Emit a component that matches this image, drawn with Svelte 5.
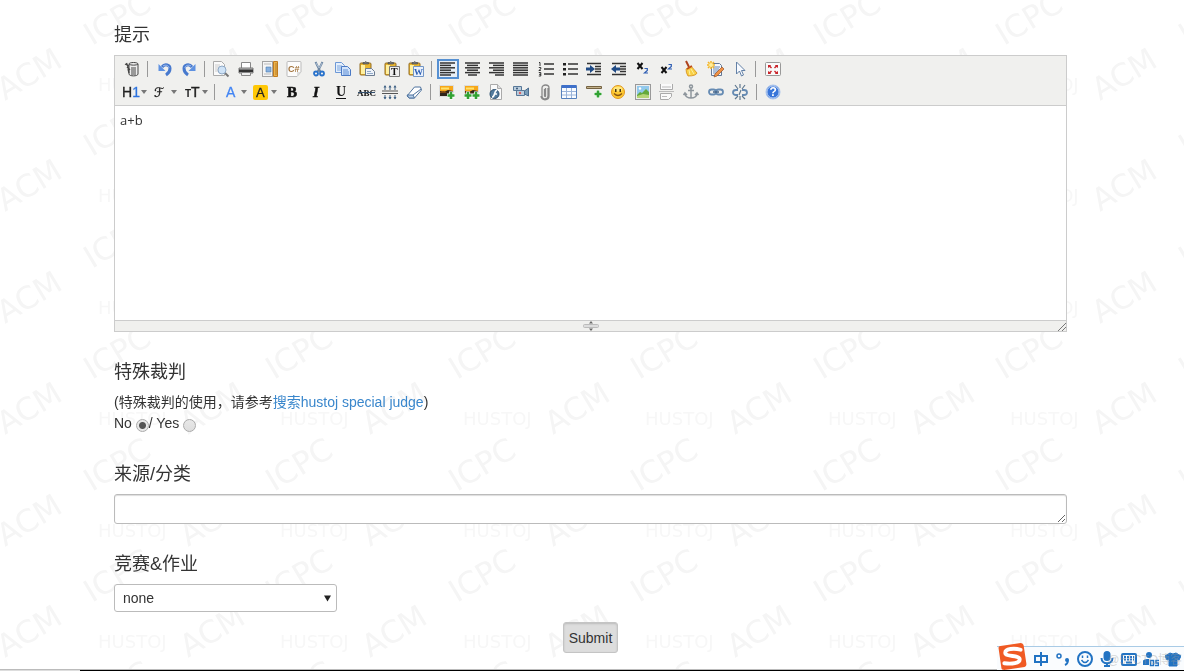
<script lang="ts">
	interface Tool {
		name: string;
		wide?: boolean;
		active?: boolean;
	}

	let hint = $state('a+b');
	let source = $state('');
	let spj = $state('0');
	let contest = $state('none');
	let innerWidth = $state(0);
	let innerHeight = $state(0);

	// '|' is a separator, '*' marks the active button, '+' a button with a drop-down arrow
	const layout = [
		'source | undo redo | preview print template code cut copy paste plainpaste wordpaste | *justifyleft justifycenter justifyright justifyfull orderedlist unorderedlist indent outdent subscript superscript clearhtml quickformat selectall | fullscreen',
		'+formatblock +fontname +fontsize | +forecolor +hilitecolor bold italic underline strikethrough lineheight removeformat | image multiimage flash media insertfile table hr emoticons baidumap pagebreak anchor link unlink | about'
	];

	const rows: (Tool | null)[][] = layout.map((row) =>
		row.split(' ').map((item) => {
			if (item === '|') return null;
			return { name: item.replace(/^[*+]/, ''), wide: item[0] === '+', active: item[0] === '*' };
		})
	);

	const lines = (widths: number[], align: string) =>
		widths
			.map((w, i) => {
				const x = align === 'left' ? 0 : align === 'right' ? 15 - w : (15 - w) / 2;
				return `<path stroke="#333" stroke-width="1.5" d="M${x} ${2 + i * 2.4}h${w}"/>`;
			})
			.join('');

	const board =
		'<rect x="1" y="2" width="11" height="12" rx="1" fill="#e9b62f" stroke="#936c25"/><path fill="#fff0a0" d="M2 4h4v9H2z"/><path fill="#777" stroke="#444" stroke-width=".6" d="M4 3V1.5h1.5l1-1 1.5 1h1.5V3z"/>';
	const photo =
		'<rect x=".5" y="1.5" width="14" height="11" fill="#302419" stroke="#ddd"/><path fill="#f7a719" d="M1 2h13v5L9 6 5 8 1 7z"/><path fill="#ffe26b" d="M2 3.500h8v2H2z"/><path fill="#794411" d="M1 8l4-1 3 2 6-1v1H1z"/>';
	const plus = (x: number, y: number) =>
		`<path stroke="#fff" stroke-width="4" d="M${x - 4} ${y}h8M${x} ${y - 4}v8"/><path stroke="#32a233" stroke-width="2.6" d="M${x - 3.5} ${y}h7M${x} ${y - 3.5}v7"/>`;
	const sheet = '<path fill="#fafafa" stroke="#aaa" d="M2.5.5h7l4 4v11h-11z"/><path fill="#ddd" stroke="#aaa" d="M9.5.5v4h4"/>';
	const marker = '<path stroke="#333" stroke-width="1.5" d="M6 3h10M6 8h10M6 13h10"/>';
	const shift = '<path stroke="#333" stroke-width="1.5" d="M1 2.5h14M9 5.5h6M9 8h6M9 10.5h6M1 13.5h14"/>';
	const serif = 'font-family="Liberation Serif, serif" fill="#111"';
	const sans = 'font-family="Liberation Sans, sans-serif"';

	const icons: Record<string, string> = {
		source:
			'<path fill="#eee" stroke="#444" d="M5 3C5 1 14 1 14 3v10c0 2.500-9 2.500-9 0z"/><path fill="none" stroke="#444" d="M5 3c1 1.500 8 1.500 9 0M7 7h5M7 9h5M7 11h5M7 13h5"/><path fill="none" stroke="#444" stroke-width="1.300" d="M1 3l4 2M2.500 2l2 5M3 6l3 3M4 8l1 4"/>',
		undo: '<path fill="none" stroke="#4779ce" stroke-width="3" d="M5 6c3-4 8-2 8 1.500 0 3-1 4.500-4 6.500"/><path fill="#5e91e1" d="M1.500 3v7h7z"/><path fill="none" stroke="#b4cdf4" stroke-width=".8" d="M6 5c3-2 6 0 6 2"/>',
		redo: '<path fill="none" stroke="#4779ce" stroke-width="3" d="M11 6C8 2 3 4 3 7.500c0 3 1 4.500 4 6.500"/><path fill="#5e91e1" d="M14.500 3v7h-7z"/><path fill="none" stroke="#b4cdf4" stroke-width=".8" d="M10 5C7 3 4 5 4 7"/>',
		preview:
			'<path fill="#fafafa" stroke="#aaa" d="M.5.5h8l3 3v11H.5z"/><path stroke="#ccc" d="M2 4h5M2 6h6M2 8h4M2 10h3"/><path stroke="#777" stroke-width="2" d="M11.500 11.500l4 4"/><circle cx="9" cy="9" r="4" fill="#cfe3f7" stroke="#8fa9c5"/>',
		print:
			'<path fill="#fff" stroke="#888" d="M3.500 1.500h9v6h-9z"/><path fill="#bbb" stroke="#777" d="M1 7h14v5H1z"/><path fill="#333" d="M1 8.500h14V11H1z"/><path fill="#eee" stroke="#888" d="M3.500 11.500h9v3h-9z"/>',
		template:
			'<path fill="#f5f5f5" stroke="#555" stroke-dasharray="1 1" d="M.5.5h10v15H.5z"/><path fill="#86b0e0" stroke="#4c7dae" stroke-width=".6" d="M4 6h5v5H4z"/><path stroke="#bbb" d="M2 3h7M2 13h7"/><path fill="#edb34b" stroke="#c07b20" d="M11.500.5h4v15h-4z"/><path stroke="#8e5b17" stroke-width=".6" d="M13 3h2M13 5h2M13 7h2M13 9h2M13 11h2M13 13h2"/>',
		code: `<path fill="#fcfcfc" stroke="#bbb" d="M2 .5h12q1 0 1 1V11l-4 4.500H2q-1 0-1-1v-13q0-1 1-1z"/><path fill="#ddd" d="M11 15l4-4h-4z"/><text x="2" y="10.500" font-size="9" font-weight="bold" ${sans} fill="#a3743c">C#</text>`,
		cut: '<path stroke="#6c86a3" stroke-width="2" d="M4.500 1l5 10M11.500 1l-5 10"/><path stroke="#dce8f4" stroke-width=".6" d="M5 2l3 5M11 2L8.500 7"/><circle cx="5" cy="12.500" r="2" fill="none" stroke="#2872cb" stroke-width="1.800"/><circle cx="11" cy="12.500" r="2" fill="none" stroke="#2872cb" stroke-width="1.800"/>',
		copy: '<path fill="#e4effc" stroke="#6d98d6" d="M.5 1.500h6l3 3v7h-9z"/><path stroke="#7ba5de" d="M2 5h5M2 7h5M2 9h4"/><path fill="#d2e4fb" stroke="#4b7ac5" d="M6.500 5.500h6l3 3v6h-9z"/><path stroke="#5f8ed4" d="M8 9h5M8 11h6M8 13h6"/>',
		paste: board + '<path fill="#eef3f9" stroke="#6c7c91" d="M6.500 7.500h6l3 3v4h-9z"/><path stroke="#91a9c8" d="M8 10.500h4M8 12.500h6"/>',
		plainpaste: board + `<path fill="#eee" stroke="#777" d="M5.500 5.500h10v10h-10z"/><text x="7" y="14" font-size="10" font-weight="bold" ${serif}>T</text>`,
		wordpaste: board + `<path fill="#e9f1fc" stroke="#7396c6" d="M5.500 5.500h10v10h-10z"/><text x="6" y="14" font-size="9" font-weight="bold" font-family="Liberation Serif, serif" fill="#2e60b5">W</text>`,
		justifyleft: lines([15, 11, 15, 11, 15, 11], 'left'),
		justifycenter: lines([15, 11, 15, 11, 15, 9], 'center'),
		justifyright: lines([15, 11, 15, 11, 15, 9], 'right'),
		justifyfull: lines([15, 15, 15, 15, 15, 15], 'left'),
		orderedlist: marker + '<path fill="none" stroke="#222" stroke-width=".9" d="M1 1.500h1V5M.8 6.500h2V8l-2 1.500h2M.8 11.500h2V15h-2M1 13.300h2"/>',
		unorderedlist: marker + '<path fill="#222" d="M1 2h3v2.500H1zM1 7h3v2.500H1zM1 12h3v2.500H1z"/>',
		indent: shift + '<path fill="#1f4a85" d="M0 6.500h4V4l5 4-5 4V9.500H0z"/>',
		outdent: shift + '<path fill="#1f4a85" d="M9 6.500H5V4L0 8l5 4V9.500h4z"/>',
		subscript: '<path stroke="#111" stroke-width="2" d="M2.500 2l5 6M7.500 2l-5 6"/><path fill="none" stroke="#2d5db3" stroke-width="1.200" d="M9.500 7.500h2.800v2L9.500 12h3.500"/>',
		superscript: '<path stroke="#111" stroke-width="2" d="M2.500 6l5 6M7.500 6l-5 6"/><path fill="none" stroke="#2d5db3" stroke-width="1.200" d="M9.500 3.500h2.800v2L9.500 8h3.500"/>',
		clearhtml:
			'<path stroke="#ad421d" stroke-width="2" d="M3 0l3 6"/><path fill="#f8cf45" stroke="#d48b14" stroke-width=".8" d="M3 8l5-3 6 7q-1 3-9 3-2-3-2-7z"/><path stroke="#bd4c1d" stroke-width="1.500" d="M4 8l5-3"/><path stroke="#fbf0a0" d="M6 9l1 5M8 8l3 5"/>',
		quickformat:
			'<path fill="#f5f8fc" stroke="#637794" d="M3.500 2.500h8l2 2v10h-10z"/><path stroke="#6789b9" d="M5 6h7M5 8h6M5 10h6M5 12h5"/><path stroke="#f4b526" stroke-width="1.500" d="M3 0v8M-1 4h8M0 1l6 6M6 1L0 7"/><circle cx="3" cy="4" r="2" fill="#ffef9b"/><path fill="#ef9144" stroke="#985329" stroke-width=".7" d="M14 6l2 2-7 7-3 1 1-3z"/>',
		selectall: '<path fill="#f7faff" stroke="#6381a6" d="M4.500 1v12l3-3 2 5 2-1-2-4.500H13z"/>',
		fullscreen:
			'<rect x=".5" y="1.500" width="15" height="13" rx="1" fill="#f9f9f9" stroke="#999"/><path fill="#c9252b" d="M3 4h3L5.500 5 7 6.500l-1 1L4.500 6 3 7zM13 4h-3l.5 1L9 6.500l1 1L11.500 6 13 7zM3 13h3l-.5-1L7 10.500l-1-1L4.500 11 3 10zM13 13h-3l.5-1L9 10.500l1-1 1.500 1.500 1.500-1z"/>',
		formatblock: `<text x="-1" y="13" font-size="14" stroke="#222" stroke-width=".3" ${sans} fill="#222">H<tspan fill="#2d73df" stroke="#2d73df">1</tspan></text>`,
		fontname: '<text x="1" y="13" font-size="13" font-family="DejaVu Serif, DejaVu Sans, serif" stroke="#222" stroke-width=".3" fill="#222">ℱ</text>',
		fontsize: `<text x="1" y="13" font-size="10" font-weight="bold" ${sans} fill="#222">T<tspan font-size="14" font-weight="normal" stroke="#222" stroke-width=".4">T</tspan></text>`,
		forecolor: `<text x="3" y="13" font-size="14" stroke="#4285f4" stroke-width=".3" ${sans} fill="#4285f4">A</text>`,
		hilitecolor: `<rect x="0" y="1" width="15" height="15" rx="2" fill="#ffc806"/><text x="3" y="13" font-size="13" stroke="#222" stroke-width=".3" ${sans} fill="#222">A</text>`,
		bold: `<text x="3" y="13" font-size="15" font-weight="bold" stroke="#111" stroke-width=".6" ${serif}>B</text>`,
		italic: `<text x="4" y="13" font-size="15" font-weight="bold" font-style="italic" stroke="#111" stroke-width=".5" ${serif}>I</text>`,
		underline: `<text x="3" y="12" font-size="14" font-weight="bold" ${serif}>U</text><path stroke="#111" d="M3 14.500h10"/>`,
		strikethrough: `<text x="-1" y="11.500" font-size="9" font-weight="bold" ${serif}>ABC</text><path stroke="#34506e" d="M0 8.500h17"/>`,
		lineheight:
			'<path stroke="#555" stroke-width="1.200" d="M0 7h16M0 9.500h16"/><path stroke="#416385" d="M3 2v4M8 2v4M13 2v4M3 11v4M8 11v4M13 11v4"/><path fill="#416385" d="M1.500 3.500L3 1l1.500 2.500zM6.500 3.500L8 1l1.500 2.500zM11.500 3.500L13 1l1.500 2.500zM1.500 13L3 15.500 4.500 13zM6.500 13L8 15.500 9.500 13zM11.500 13l1.500 2.500 1.500-2.500z"/>',
		removeformat: '<path fill="#fff" stroke="#4e739e" d="M8.500 3h6l1 3-7 8H3l-2-2z"/><path fill="#b9d0e9" stroke="#4e739e" d="M1 11h6l1.500 3H3z"/><path stroke="#4e739e" d="M7 11l8-6"/>',
		image: photo + plus(12, 11.5),
		multiimage: photo + plus(4, 11.5) + plus(12, 11.5),
		flash: sheet + '<circle cx="6.500" cy="10" r="4.500" fill="#537b9d" stroke="#2b4f70"/><path fill="none" stroke="#fff" stroke-width="1.600" d="M9 6c-2 1-2 2-2.500 4S5 13 4 13M6 10h3"/>',
		media: '<path fill="#bacddd" stroke="#587898" d="M.5 2.500h8v4h-8zM3.500 6.500h8v5h-8z"/><path fill="#779bb8" stroke="#4b6d90" d="M11.500 7l4-3v8l-4-2z"/><circle cx="4" cy="4.500" r="1" fill="#365577"/><circle cx="7" cy="9" r="1.200" fill="#d76161"/>',
		insertfile: '<path fill="none" stroke="#888" stroke-width="1.300" d="M11 4v8c0 4-6 4-6 0V4c0-4 7-4 7 0v8c0 5-8 5-8 0M7.500 5v7q1 1 1 0V4"/>',
		table: '<path fill="#f9fcff" stroke="#5681bd" d="M.5 1.500h15v13H.5z"/><path fill="#3e70ca" d="M1 1h14v3H1z"/><path stroke="#9ab4da" d="M1 7.500h14M1 11h14M5.500 4v10M10.500 4v10"/>',
		hr: '<path fill="#c3b18a" stroke="#756342" d="M.5 2.500h15v2H.5z"/>' + plus(12, 10),
		emoticons: '<circle cx="8" cy="8" r="6.500" fill="#fdc832" stroke="#e19821"/><ellipse cx="8" cy="5" rx="4.500" ry="2.500" fill="#ffe77b"/><path fill="#493413" d="M5 5h1.500v3H5zM9.500 5H11v3H9.500z"/><path fill="none" stroke="#8a5510" stroke-width="1.200" d="M4 9.500q4 4 8 0"/>',
		baidumap: '<rect x=".5" y=".5" width="15" height="15" fill="#eee" stroke="#999"/><path fill="#92c9ed" d="M2 2h12v12H2z"/><path fill="#64a93c" d="M2 11l3-3 2 1 4-4 3 3v6H2z"/><path fill="#b5d577" d="M2 12l6-2 6 1v3H2z"/><circle cx="5" cy="4.500" r="1.200" fill="#fff"/>',
		pagebreak: '<path fill="#fafafa" stroke="#aaa" d="M1.500 0v5.500h12V0M1.500 15.500v-6h11v3l-3 3z"/><path stroke="#bbb" d="M3 3h9M0 7.500h15M3 12.500h5"/>',
		anchor: '<g fill="none" stroke="#8e969d" stroke-width="1.500"><circle cx="8" cy="2.500" r="1.500"/><path d="M8 4v10M5 6.500h6M2 9.500c0 6 12 6 12 0M.5 11L2 9l2 2M12 11l2-2 1.500 2"/></g>',
		link: '<g fill="none" stroke="#668bb3" stroke-width="1.800"><rect x="1" y="5.500" width="7" height="5" rx="2.500"/><rect x="8" y="5.500" width="7" height="5" rx="2.500"/></g><path stroke="#436388" stroke-width="1.500" d="M5 8h6"/>',
		unlink: '<g fill="none" stroke="#668bb3" stroke-width="1.800"><path d="M6 11H4q-3 0-3-2.500T4 6h2M10 11h2q3 0 3-2.500T12 6h-2"/></g><path stroke="#60798f" stroke-width="1.200" d="M8 0v4M3 1l3 4M13 1l-3 4M8 12v4M3 15l3-3M13 15l-3-3M9 6l-2 5"/>',
		about: `<circle cx="8" cy="8" r="7" fill="#3875d9" stroke="#aac5ed"/><circle cx="8" cy="8" r="6" fill="none" stroke="#fff" stroke-width=".6"/><text x="4.500" y="12" font-size="12" font-weight="bold" ${sans} fill="#fff">?</text>`
	};

	const ime = [
		{ name: 'Chinese input', art: '<path fill="none" d="M2 5h12v6H2zM8 1v14"/>' },
		{ name: 'Punctuation', art: '<circle cx="4" cy="5" r="2" fill="none" stroke-width="1.500"/><path fill="none" d="M12 8q2 4-2 6"/><circle cx="12" cy="9" r="1"/>' },
		{ name: 'Emoji', art: '<circle cx="8" cy="8" r="7" fill="none"/><path fill="none" stroke-width="1.500" d="M4.500 9q3.500 5 7 0M5.500 4.500v2.500M10.500 4.500v2.500"/>' },
		{ name: 'Voice', art: '<rect x="5.500" y="1" width="5" height="8" rx="2.500"/><path fill="none" d="M2.500 7c0 7 11 7 11 0M8 12v3M5 15h6"/>' },
		{ name: 'Keyboard', art: '<rect x="1" y="3" width="14" height="11" rx="1" fill="none"/><path stroke-dasharray="2 1" d="M3 6h10M3 8.500h10"/><path d="M5 11.500h6"/>' },
		{ name: 'Account', art: '<circle cx="6" cy="4" r="3" stroke="none"/><path stroke="none" d="M-1 13q0-5 5-5h4v6h-9z"/><path fill="#fff" stroke="none" d="M6 8h11v8H6z"/><path fill="none" stroke-width="1.500" d="M7.500 9.500h3v5h-3zM16 9.500h-3V12h2.500v2.500H12"/>' },
		{ name: 'Skin', art: '<path stroke-width="1" d="M5 2q3 2 6 0l5 3-2 4-2-1v7H4V8L2 9 0 5z"/>' }
	];

	// the watermark repeats twice in every 365 x 223 block
	let columns = $derived(Array.from({ length: Math.ceil(innerWidth / 182) + 1 }, (_, i) => Math.round((i * 365) / 2) - 183));
	let bands = $derived(Array.from({ length: Math.ceil(innerHeight / 111) + 1 }, (_, i) => Math.round((i * 223) / 2) - 120));
</script>

<svelte:window bind:innerWidth bind:innerHeight />

<svg class="backdrop" aria-hidden="true">
	{#each bands as y}
		{#each columns as x}
			<g transform="translate({x} {y})">
				<text class="slanted" transform="translate(92 54) rotate(-31)">ICPC</text>
				<text class="flat" x="98" y="99">HUSTOJ</text>
				<text class="slanted" transform="translate(188 109) rotate(-31)">ACM</text>
			</g>
		{/each}
	{/each}
</svg>

<form onsubmit={(e) => e.preventDefault()}>
	<section>
		<h4><label for="hint">提示</label></h4>
		<div class="editor">
			<div class="toolbar">
				{#each rows as row}
					<div class="row">
						{#each row as tool}
							{#if tool}
								<button type="button" class:wide={tool.wide} class:active={tool.active} aria-label={tool.name}>
									<svg class="icon" viewBox="0 0 16 16">{@html icons[tool.name]}</svg>
									{#if tool.wide}
										<svg class="caret" viewBox="0 0 6 4"><path d="M0 0h6L3 4z" /></svg>
									{/if}
								</button>
							{:else}
								<span class="separator"></span>
							{/if}
						{/each}
					</div>
				{/each}
			</div>
			<textarea id="hint" class="content" bind:value={hint}></textarea>
			<div class="statusbar">
				<svg class="handle" viewBox="0 0 16 10">
					<path fill="#666" d="M6 2.500L8 0l2 2.500zM6 7.500L8 10l2-2.500z" />
					<rect x="0.500" y="3.500" width="15" height="3" rx="1" fill="#ddd" stroke="#bbb" />
				</svg>
				<svg class="grip" viewBox="0 0 8 8"><path d="M0 8l8-8M4 8l4-4" /></svg>
			</div>
		</div>
	</section>

	<section>
		<h4>特殊裁判</h4>
		<div class="line">(特殊裁判的使用，请参考<a href="#spj">搜索hustoj special judge</a>)</div>
		<div class="line">
			<label>No <input type="radio" name="spj" value="0" bind:group={spj} /></label>/
			<label>Yes <input type="radio" name="spj" value="1" bind:group={spj} /></label>
		</div>
	</section>

	<section>
		<h4><label for="source">来源/分类</label></h4>
		<textarea id="source" class="source" bind:value={source}></textarea>
	</section>

	<section>
		<h4><label for="contest">竞赛&amp;作业</label></h4>
		<div class="select">
			<select id="contest" bind:value={contest}>
				<option value="none">none</option>
			</select>
			<svg viewBox="0 0 8 7"><path d="M0 0h8L4 7z" /></svg>
		</div>
	</section>

	<button class="submit" type="submit">Submit</button>
</form>

<div class="taskbar"></div>

<div class="ime">
	<svg class="sogou" viewBox="0 0 30 28" aria-hidden="true">
		<path fill="#f05a23" d="M1 5q0-2 2-2L24 0q2 0 3 2l3 20q0 2-2 3L7 28q-3 0-3-2z" />
		<path fill="none" stroke="#fff" stroke-width="4" stroke-linecap="round" d="M24 7C17 5 8 6 8 10c0 5 15 2 15 7 0 4-8 5-16 4" />
	</svg>
	{#each ime as item}
		<button type="button" aria-label={item.name}>
			<svg viewBox="0 0 16 16">{@html item.art}</svg>
		</button>
	{/each}
	<span class="credit">@51CTO博客</span>
</div>

<style>
	:global(body) {
		background: #fff;
		color: #333;
		font-family: 'Liberation Sans', 'Noto Sans CJK SC', sans-serif;
		font-size: 14px;
	}
	button,
	select,
	textarea {
		box-sizing: border-box;
		margin: 0;
		color: inherit;
		font: inherit;
	}
	.backdrop {
		position: fixed;
		inset: 0;
		z-index: -1;
		width: 100%;
		height: 100%;
		font-family: 'DejaVu Sans', sans-serif;
	}
	.slanted {
		fill: #f5f5f5;
		font-size: 31px;
	}
	.flat {
		fill: #f7f7f7;
		font-size: 18px;
	}
	form {
		display: flex;
		flex-direction: column;
		padding: 25px 117px 16px 114px;
	}
	section {
		margin-bottom: 30px;
	}
	section:last-of-type {
		margin-bottom: 10px;
	}
	h4 {
		margin: 0 0 10px;
		font-size: 18px;
		font-weight: normal;
		line-height: 20px;
	}
	.editor {
		border: 1px solid #ccc;
		background: #fff;
	}
	.toolbar {
		display: flex;
		flex-direction: column;
		gap: 3px;
		padding: 3px 6px;
		border-bottom: 1px solid #ccc;
		background: #f0f0ee;
	}
	.row {
		display: flex;
		align-items: center;
		justify-content: space-between;
		max-width: 663px;
	}
	.row button {
		display: flex;
		align-items: center;
		justify-content: center;
		width: 22px;
		height: 20px;
		padding: 0;
		border: 1px solid transparent;
		background: none;
	}
	.row button.wide {
		width: 28px;
	}
	.row button.active {
		border: 2px solid #5690d2;
		background: #e9eff6;
	}
	.icon {
		flex: none;
		width: 16px;
		height: 16px;
		overflow: visible;
	}
	.caret {
		width: 6px;
		height: 4px;
		margin-left: 2px;
		fill: #777;
	}
	.separator {
		width: 1px;
		height: 16px;
		margin: 0 3px 0 2px;
		background: #999;
	}
	.content {
		display: block;
		width: 100%;
		height: 214px;
		padding: 4px 5px;
		border: 0;
		outline: none;
		resize: none;
		font-family: 'Open Sans', sans-serif;
		font-size: 13px;
		line-height: 20px;
	}
	.statusbar {
		display: grid;
		grid-template-columns: 1fr auto 1fr;
		align-items: center;
		height: 10px;
		border-top: 1px solid #ccc;
		background: #f0f0ee;
	}
	.handle {
		grid-column: 2;
		width: 16px;
		height: 10px;
	}
	.grip {
		justify-self: end;
		align-self: end;
		width: 8px;
		height: 8px;
		stroke: #777;
	}
	.line {
		line-height: 21px;
	}
	a {
		color: #3a87cc;
		text-decoration: none;
	}
	input[type='radio'] {
		appearance: none;
		box-sizing: border-box;
		width: 13px;
		height: 13px;
		margin: 0;
		border: 1px solid #aaa;
		border-radius: 50%;
		background: linear-gradient(#e8e8e8, #ddd);
		vertical-align: -4px;
	}
	input[type='radio']:checked {
		background: radial-gradient(circle, #555 3px, #e8e8e8 4px);
	}
	.source {
		display: block;
		width: 100%;
		height: 30px;
		padding: 4px 8px;
		border: 1px solid #bbb;
		border-radius: 3px;
		background: #fff;
		box-shadow: inset 0 1px 1px #ddd;
		resize: vertical;
	}
	.select {
		display: grid;
		align-items: center;
		width: 223px;
	}
	.select select,
	.select svg {
		grid-area: 1 / 1;
	}
	.select select {
		appearance: none;
		height: 28px;
		padding: 0 8px;
		border: 1px solid #bbb;
		border-radius: 3px;
		background: #fff;
	}
	.select svg {
		justify-self: end;
		width: 7px;
		height: 7px;
		margin-right: 6px;
		fill: #222;
		pointer-events: none;
	}
	.submit {
		align-self: center;
		height: 31px;
		padding: 0 5px;
		border: 1px solid #c4c4c4;
		border-radius: 3px;
		background: #ddd;
		box-shadow: inset 0 1px 2px #bbb;
	}
	.taskbar {
		position: fixed;
		inset: auto 0 0;
		height: 1px;
		border-top: 1px solid #bbb;
		background: linear-gradient(90deg, #ddd 80px, #000 80px);
	}
	.ime {
		position: fixed;
		right: 0;
		bottom: 1px;
		display: flex;
		align-items: center;
		gap: 6px;
		height: 23px;
		padding-right: 3px;
		border-top: 1px solid #a9cbe6;
		background: #fafcfe;
	}
	.ime button {
		display: flex;
		padding: 0;
		border: 0;
		background: none;
	}
	.ime button svg {
		width: 16px;
		height: 16px;
		fill: #2273c3;
		stroke: #2273c3;
		stroke-width: 2;
	}
	.sogou {
		align-self: flex-end;
		width: 30px;
		height: 27px;
	}
	.credit {
		position: absolute;
		right: 2px;
		bottom: 3px;
		color: #9996;
		font-size: 12px;
		pointer-events: none;
	}
</style>
